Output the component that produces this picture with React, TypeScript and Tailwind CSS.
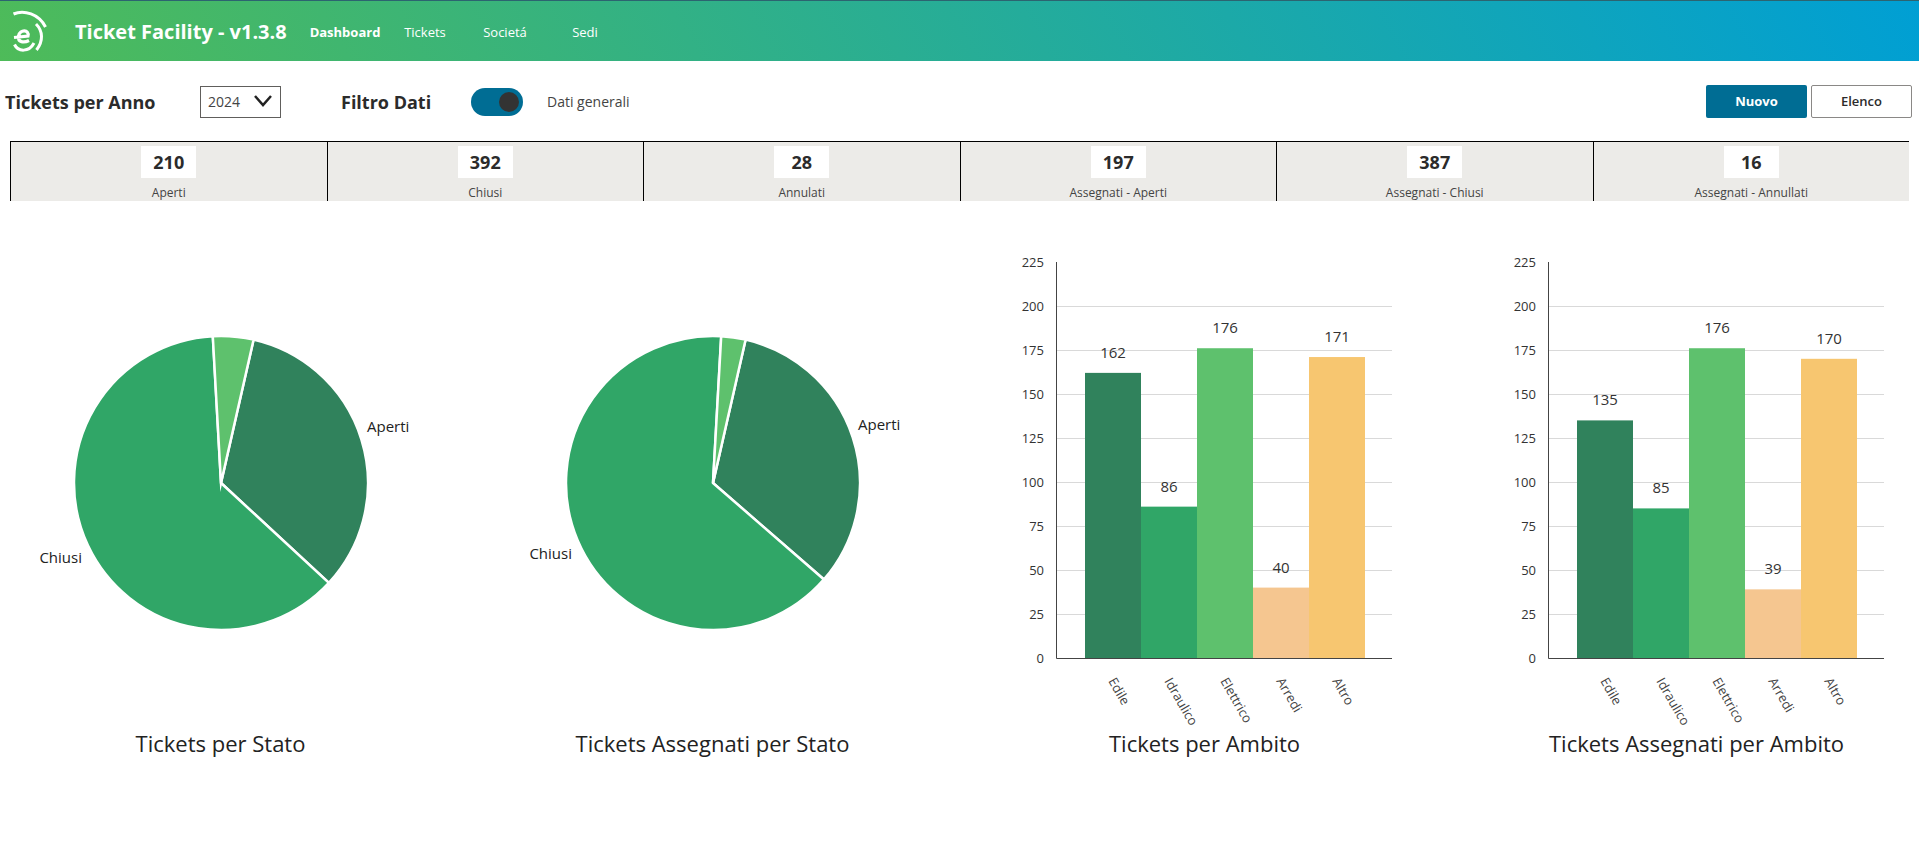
import { useState } from "react";

const stats = [
  { value: 210, label: "Aperti" },
  { value: 392, label: "Chiusi" },
  { value: 28, label: "Annulati" },
  { value: 197, label: "Assegnati - Aperti" },
  { value: 387, label: "Assegnati - Chiusi" },
  { value: 16, label: "Assegnati - Annullati" },
];

const navItems = ["Dashboard", "Tickets", "Societá", "Sedi"];

const colors = ["#30825c", "#30a667", "#5ec16d", "#f5c690", "#f7c670"];

const categories = ["Edile", "Idraulico", "Elettrico", "Arredi", "Altro"];

type PieLabel = { text: string; x: number; y: number; anchor: "start" | "end" };

const START_ANGLE = 12.8;

function PieChart({ title, values, labels }: { title: string; values: number[]; labels: PieLabel[] }) {
  const cx = 221;
  const cy = 282;
  const r = 147;
  const total = values.reduce((a, b) => a + b, 0);
  const point = (deg: number) => {
    const rad = (deg * Math.PI) / 180;
    return `${cx + r * Math.sin(rad)} ${cy - r * Math.cos(rad)}`;
  };

  let angle = START_ANGLE;
  const slices = values.map((value, i) => {
    const from = angle;
    const sweep = (value / total) * 360;
    angle += sweep;
    return {
      d: `M${cx} ${cy}L${point(from)}A${r} ${r} 0 ${sweep > 180 ? 1 : 0} 1 ${point(angle)}Z`,
      fill: colors[i],
    };
  });

  return (
    <figure className="flex flex-col">
      <svg viewBox="0 0 441 526" className="w-full overflow-visible" role="img" aria-label={title}>
        {slices.map((s) => (
          <path key={s.fill} d={s.d} fill={s.fill} stroke="#fff" strokeWidth="2.5" strokeMiterlimit="10" />
        ))}
        {labels.map((l) => (
          <text key={l.text} x={l.x} y={l.y} textAnchor={l.anchor} className="fill-[#222] text-[15px]">
            {l.text}
          </text>
        ))}
      </svg>
      <figcaption className="text-center text-[22px] leading-8 text-[#222]">{title}</figcaption>
    </figure>
  );
}

function BarChart({ title, values }: { title: string; values: number[] }) {
  const left = 72;
  const right = 408;
  const bottom = 457;
  const step = 44;
  const barWidth = 56;
  const y = (v: number) => bottom - (v * step) / 25;

  return (
    <figure className="flex flex-col">
      <svg viewBox="0 0 441 526" className="w-full overflow-visible" role="img" aria-label={title}>
        {[25, 50, 75, 100, 125, 150, 175, 200].map((tick) => (
          <line key={tick} x1={left} x2={right} y1={y(tick) + 0.5} y2={y(tick) + 0.5} stroke="#d9d9d9" />
        ))}
        {[0, 25, 50, 75, 100, 125, 150, 175, 200, 225].map((tick) => (
          <text key={tick} x={60} y={y(tick) + 5} textAnchor="end" className="fill-[#333] text-[13px]">
            {tick}
          </text>
        ))}
        {values.map((value, i) => {
          const x = left + 29 + i * barWidth;
          return (
            <g key={categories[i]}>
              <rect x={x} y={y(value)} width={barWidth} height={bottom - y(value)} fill={colors[i]} />
              <text x={x + 28} y={y(value) - 15} textAnchor="middle" className="fill-[#333] text-[15px]">
                {value}
              </text>
              <text
                transform={`translate(${x + 23} ${bottom + 23}) rotate(60)`}
                className="fill-[#444] text-[13px]"
              >
                {categories[i]}
              </text>
            </g>
          );
        })}
        <path d={`M${left + 0.5} ${y(225)}V${bottom + 0.5}H${right}`} fill="none" stroke="#444" />
      </svg>
      <figcaption className="text-center text-[22px] leading-8 text-[#222]">{title}</figcaption>
    </figure>
  );
}

function Logo() {
  return (
    <svg viewBox="0 0 48 60" className="h-[60px] w-12" fill="none" stroke="#fff" aria-hidden="true">
      <path d="M13.5 13C24 8.500 39 13 45.500 26" strokeWidth="3" />
      <path d="M36 23C43 30 43.500 40 36.500 49" strokeWidth="3" />
      <path d="M14.500 43.500C18 51 29 51.500 34 42" strokeWidth="3" />
      <path d="M14 36.500L28 35C29.500 28.500 20 28 18.500 35C17.500 41.500 24 42 29 39.500" strokeWidth="3.2" />
    </svg>
  );
}

export default function App() {
  const [active, setActive] = useState("Dashboard");
  const [general, setGeneral] = useState(true);

  return (
    <div className="min-h-screen bg-white font-['Open_Sans','Noto_Sans',sans-serif] text-[#2b2b2b]">
      <header className="flex h-[61px] items-center border-t border-[#2c6470] bg-linear-[60deg,#4ebb59,#009fd4] text-white">
        <Logo />
        <h1 className="ml-[27px] w-[230px] pt-0.5 text-xl font-bold whitespace-nowrap">Ticket Facility - v1.3.8</h1>
        <nav className="flex pt-1">
          {navItems.map((item) => (
            <a
              key={item}
              href="#"
              onClick={() => setActive(item)}
              className={`w-20 text-center text-[13px] ${item === active ? "font-bold" : ""}`}
            >
              {item}
            </a>
          ))}
        </nav>
      </header>

      <div className="flex h-20 items-center pt-px pr-[7px] pl-[5px]">
        <label htmlFor="anno" className="w-[195px] text-lg font-bold">
          Tickets per Anno
        </label>
        <div className="relative">
          <select
            id="anno"
            defaultValue="2024"
            className="block h-8 w-[81px] appearance-none border border-[#605e5c] bg-white pl-[7px] text-sm text-[#444]"
          >
            <option>2024</option>
            <option>2023</option>
          </select>
          <svg
            viewBox="0 0 20 14"
            className="pointer-events-none absolute top-2 right-2 h-3.5 w-5"
            fill="none"
            stroke="#222"
            strokeWidth="2.5"
            aria-hidden="true"
          >
            <path d="M2 2l8 9 8-9" />
          </svg>
        </div>
        <span className="ml-[60px] w-[130px] text-lg font-bold">Filtro Dati</span>
        <label className="flex cursor-pointer items-center gap-6 text-sm text-[#444]">
          <input
            type="checkbox"
            role="switch"
            checked={general}
            onChange={(e) => setGeneral(e.target.checked)}
            className="peer sr-only"
          />
          <span className="flex h-7 w-[52px] items-center rounded-full bg-[#a19f9d] px-1 peer-checked:justify-end peer-checked:bg-[#006d94]">
            <span className="size-5 rounded-full bg-[#333]" />
          </span>
          Dati generali
        </label>
        <div className="ml-auto flex gap-1">
          <button type="button" className="h-[33px] w-[101px] rounded-xs bg-[#006d94] text-[13px] font-bold text-white">
            Nuovo
          </button>
          <button type="button" className="h-[33px] w-[101px] rounded-xs border border-[#8a8886] bg-white text-[13px] font-semibold">
            Elenco
          </button>
        </div>
      </div>

      <dl className="mx-2.5 grid grid-cols-6 border-t border-black bg-[#ecebe8]">
        {stats.map((s) => (
          <div key={s.label} className="flex h-[59px] flex-col-reverse items-center justify-end gap-[7px] border-l border-black pt-1">
            <dt className="text-xs text-[#444]">{s.label}</dt>
            <dd className="w-[55px] bg-white text-center text-lg leading-8 font-bold">{s.value}</dd>
          </div>
        ))}
      </dl>

      <main className="grid grid-cols-4 gap-[51px] pr-0.5">
        <PieChart
          title="Tickets per Stato"
          values={[210, 392, 28]}
          labels={[
            { text: "Aperti", x: 367, y: 231, anchor: "start" },
            { text: "Chiusi", x: 82, y: 362, anchor: "end" },
          ]}
        />
        <PieChart
          title="Tickets Assegnati per Stato"
          values={[197, 387, 16]}
          labels={[
            { text: "Aperti", x: 366, y: 229, anchor: "start" },
            { text: "Chiusi", x: 80, y: 358, anchor: "end" },
          ]}
        />
        <BarChart title="Tickets per Ambito" values={[162, 86, 176, 40, 171]} />
        <BarChart title="Tickets Assegnati per Ambito" values={[135, 85, 176, 39, 170]} />
      </main>
    </div>
  );
}
